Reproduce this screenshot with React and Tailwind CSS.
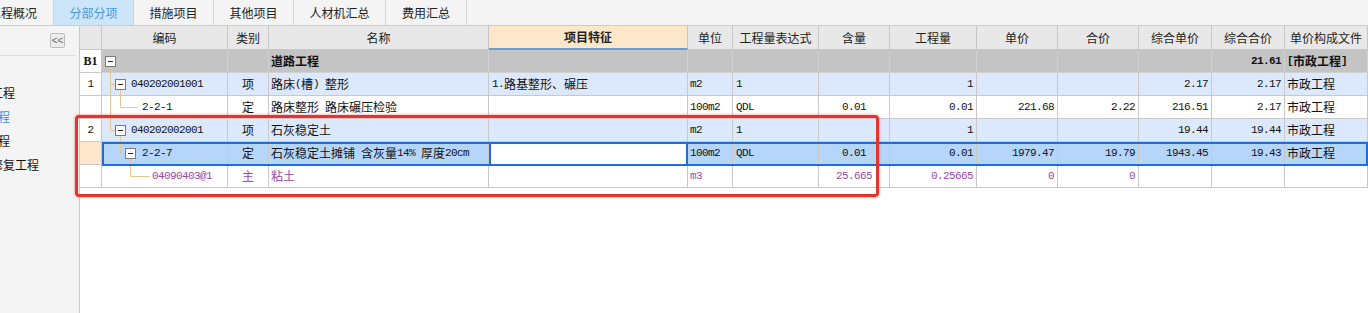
import React from 'react';

const COLS = 'grid grid-cols-[22px_126px_41px_220px_199px_45px_86px_71px_87px_81px_81px_73px_73px_1fr]';

const tabs = [
  { label: '工程概况', w: 'w-[54px]', clip: true },
  { label: '分部分项', w: 'w-[80px]', active: true },
  { label: '措施项目', w: 'w-[80px]' },
  { label: '其他项目', w: 'w-[80px]' },
  { label: '人材机汇总', w: 'w-[92px]' },
  { label: '费用汇总', w: 'w-[81px]' },
];

const headers = ['', '编码', '类别', '名称', '项目特征', '单位', '工程量表达式', '含量', '工程量', '单价', '合价', '综合单价', '综合合价', '单价构成文件'];

// alignment per column
const align = [
  'justify-center',
  '',
  'justify-center',
  'pl-[2px]',
  'pl-[3px]',
  'pl-[2px]',
  'pl-[3px]',
  'justify-center',
  'justify-end pr-[3px]',
  'justify-end pr-[3px]',
  'justify-end pr-[3px]',
  'justify-end pr-[3px]',
  'justify-end pr-[3px]',
  'pl-[2px]',
];

const rows = [
  { kind: 'b1', pad: '', cells: ['B1', '', '', '道路工程', '', '', '', '', '', '', '', '', '21.61', '[市政工程]'] },
  { kind: 'item', pad: 'pl-[29px]', cells: ['1', '040202001001', '项', '路床(槽) 整形', '1.路基整形、碾压', 'm2', '1', '', '1', '', '', '2.17', '2.17', '市政工程'] },
  { kind: 'norm', pad: 'pl-[40px]', cells: ['', '2-2-1', '定', '路床整形 路床碾压检验', '', '100m2', 'QDL', '0.01', '0.01', '221.68', '2.22', '216.51', '2.17', '市政工程'] },
  { kind: 'item', pad: 'pl-[29px]', cells: ['2', '040202002001', '项', '石灰稳定土', '', 'm2', '1', '', '1', '', '', '19.44', '19.44', '市政工程'] },
  { kind: 'sel', pad: 'pl-[40px]', cells: ['', '2-2-7', '定', '石灰稳定土摊铺 含灰量14% 厚度20cm', '', '100m2', 'QDL', '0.01', '0.01', '1979.47', '19.79', '1943.45', '19.43', '市政工程'] },
  { kind: 'main', pad: 'pl-[50px]', cells: ['', '04090403@1', '主', '粘土', '', 'm3', '', '25.665', '0.25665', '0', '0', '', '', ''] },
];

const rowBg = {
  b1: 'bg-[#c4c4c4] font-bold',
  item: 'bg-[#dce8fb]',
  norm: 'bg-white',
  sel: 'bg-[#b5d5fa]',
  main: 'bg-white text-[#9a48a8]',
};

function Txt({ s }) {
  return s
    .split(/([\x20-\x7e]+)/)
    .filter(Boolean)
    .map((p, i) =>
      /^[\x20-\x7e]+$/.test(p) ? (
        <span key={i} className="font-['Liberation_Mono',monospace] text-[11px] tracking-[-0.6px] whitespace-pre">
          {p}
        </span>
      ) : (
        <span key={i} className="font-['Noto_Sans_CJK_SC',sans-serif] text-[12px]">
          {p}
        </span>
      )
    );
}

function Row({ row }) {
  return (
    <div className={`${COLS} h-[23px] ${rowBg[row.kind]}`}>
      {row.cells.map((v, i) => {
        let extra = '';
        let border = row.kind === 'b1' && i > 0 ? 'border-[#d0d0d0]' : 'border-[#c8c8c8]';
        if (i === 0) {
          extra = row.kind === 'sel' ? 'bg-[#fde6c9]' : 'bg-white';
          if (row.kind === 'b1') extra += " font-['Liberation_Serif',serif]";
        }
        if (i === 1) extra = row.pad;
        if (row.kind === 'sel' && i === 4) extra = 'bg-white border-l-2 border-l-[#1c6ee0] !border-r-2 !border-r-[#1c6ee0]';
        return (
          <div
            key={i}
            className={`h-full flex items-center overflow-hidden whitespace-nowrap leading-[16px] border-r border-b ${border} ${align[i]} ${extra}`}
          >
            {i === 0 && row.kind === 'b1' ? <span className="text-[12px]">{v}</span> : <Txt s={v} />}
          </div>
        );
      })}
    </div>
  );
}

function Box({ x, cy }) {
  return (
    <g>
      <rect x={x + 0.5} y={cy - 5} width="10" height="10" fill="#fff" stroke="#7a7a7a" />
      <line x1={x + 3} y1={cy} x2={x + 8} y2={cy} stroke="#222" />
    </g>
  );
}

function Tree() {
  const c = '#e8c48e';
  return (
    <svg className="absolute left-[22px] top-[24px] pointer-events-none" width="126" height="138">
      <line x1="8.5" y1="16.5" x2="8.5" y2="80.5" stroke={c} />
      <line x1="8.5" y1="34.5" x2="13" y2="34.5" stroke={c} />
      <line x1="8.5" y1="80.5" x2="13" y2="80.5" stroke={c} />
      <line x1="18.5" y1="39.5" x2="18.5" y2="57.5" stroke={c} />
      <line x1="18.5" y1="57.5" x2="36" y2="57.5" stroke={c} />
      <line x1="18.5" y1="85.5" x2="18.5" y2="103.5" stroke={c} />
      <line x1="18.5" y1="103.5" x2="23" y2="103.5" stroke={c} />
      <line x1="28.5" y1="108.5" x2="28.5" y2="126.5" stroke={c} />
      <line x1="28.5" y1="126.5" x2="48" y2="126.5" stroke={c} />
      <Box x={3} cy={11.5} />
      <Box x={13} cy={34.5} />
      <Box x={13} cy={80.5} />
      <Box x={23} cy={103.5} />
    </svg>
  );
}

export default function App() {
  return (
    <div className="relative w-[1368px] h-[313px] overflow-hidden bg-white text-[#111] font-['Noto_Sans_CJK_SC',sans-serif] text-[12px]">
      {/* tabs */}
      <div className="flex h-[26px] bg-[#f4f4f4] border-b border-[#cbcbcb]">
        {tabs.map((t) => (
          <div
            key={t.label}
            className={`${t.w} h-full flex items-center border-r border-[#d2d2d2] overflow-hidden whitespace-nowrap ${
              t.clip ? '' : 'justify-center'
            } ${t.active ? 'bg-[#cde5f8] text-[#4a97e0]' : 'text-[#222]'}`}
          >
            <span className={t.clip ? 'ml-[-11px]' : ''}>{t.label}</span>
          </div>
        ))}
      </div>

      <div className="flex h-[287px]">
        {/* left tree panel */}
        <div className="w-[79px] shrink-0 bg-[#f4f4f4]">
          <div className="h-[30px] mr-[4px] border-b border-[#dcdcdc] flex justify-end pt-[7px] pr-[10px]">
            <div className="w-[15px] h-[15px] rounded-[2px] border border-[#bdbdbd] bg-[#ececec] flex items-center justify-center text-[10px] leading-none text-[#666] font-['Liberation_Sans',sans-serif]">
              &lt;&lt;
            </div>
          </div>
          <div className="mt-[25px] text-[12px]">
            <div className="h-[24px] leading-[24px] overflow-hidden whitespace-nowrap">
              <span className="ml-[-33px]">道路工程</span>
            </div>
            <div className="h-[24px] leading-[24px] overflow-hidden whitespace-nowrap text-[#3a8ee6]">
              <span className="ml-[-38px]">道路工程</span>
            </div>
            <div className="h-[24px] leading-[24px] overflow-hidden whitespace-nowrap">
              <span className="ml-[-38px]">附属工程</span>
            </div>
            <div className="h-[24px] leading-[24px] overflow-hidden whitespace-nowrap">
              <span className="ml-[-9px]">修复工程</span>
            </div>
          </div>
        </div>

        {/* grid */}
        <div className="relative flex-1 bg-white border-l border-[#c8c8c8]">
          <div className={`${COLS} h-[24px] bg-[#e8e8e8] text-[#222]`}>
            {headers.map((h, i) =>
              i === 4 ? (
                <div
                  key={i}
                  className="h-full flex items-center justify-center bg-[#fde7cb] border-r border-[#c6c6c6] border-b-2 border-b-[#6b9bd6] font-bold"
                >
                  {h}
                </div>
              ) : (
                <div
                  key={i}
                  className="h-full flex items-center justify-center border-r border-b border-[#c6c6c6] whitespace-nowrap overflow-hidden"
                >
                  {h}
                </div>
              )
            )}
          </div>
          {rows.map((r, i) => (
            <Row key={i} row={r} />
          ))}
          <Tree />
          {/* selection frame */}
          <div className="absolute left-[22px] top-[116px] right-0 h-[24px] border-2 border-[#1c6ee0] pointer-events-none" />
        </div>
      </div>

      {/* annotation */}
      <div className="absolute left-[75px] top-[115px] w-[804px] h-[82px] border-[3px] border-[#e8322c] rounded-[4px] shadow-[0_0_3px_rgba(232,50,44,0.6)] pointer-events-none" />
    </div>
  );
}
